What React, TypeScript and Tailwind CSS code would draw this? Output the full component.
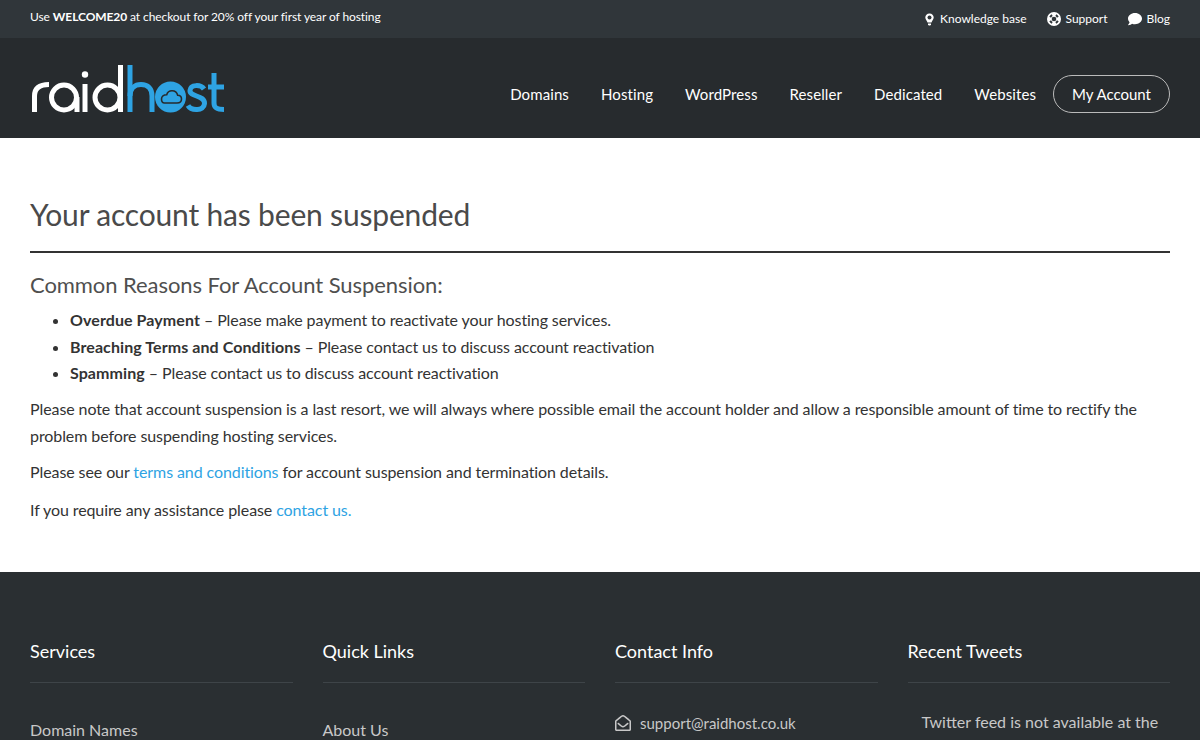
import { FaComment, FaRegEnvelopeOpen } from 'react-icons/fa';

const navLinks = ['Domains', 'Hosting', 'WordPress', 'Reseller', 'Dedicated', 'Websites'];

const BulbIcon = () => (
  <svg width="9" height="13" viewBox="0 0 9 13" className="block">
    <path d="M4.500 0.500C2 0.500 0.300 2.300 0.300 4.500C0.300 6.500 2 7.500 2.500 9.500H6.500C7 7.500 8.700 6.500 8.700 4.500C8.700 2.300 7 0.500 4.500 0.500Z" fill="#ffffff" />
    <circle cx="4.500" cy="4.500" r="2" fill="#30363a" />
    <path d="M3 10.500H6V11.500L5.200 12.500H3.800L3 11.500Z" fill="#ffffff" />
  </svg>
);

const RingIcon = () => (
  <svg width="14" height="14" viewBox="0 0 14 14" fill="none" className="block">
    <circle cx="7" cy="7" r="7" fill="#ffffff" />
    <circle cx="7" cy="7" r="2.300" fill="#30363a" />
    <path
      d="M3.200 5.200A4.300 4.300 0 0 1 5.200 3.200M8.800 3.200A4.300 4.300 0 0 1 10.800 5.200M10.800 8.800A4.300 4.300 0 0 1 8.800 10.800M5.200 10.800A4.300 4.300 0 0 1 3.200 8.800"
      stroke="#30363a"
      strokeWidth="2"
    />
  </svg>
);

const Logo = () => (
  <svg width="200" height="56" viewBox="0 0 200 56" fill="none" className="block mt-[4px]">
    {/* white part */}
    <g stroke="#ffffff" strokeWidth="5">
      <path d="M4.500 50V34C4.500 26 10 22.500 19 22.500" />
      <circle cx="34" cy="35.500" r="12.500" />
      <path d="M47 35V50" />
      <path d="M55 22V50" />
      <circle cx="77.500" cy="35.500" r="12.500" />
      <path d="M90.500 3V50" />
    </g>
    <circle cx="55" cy="12.500" r="3.200" fill="#ffffff" />
    {/* blue part */}
    <g stroke="#2ea3e3" strokeWidth="5">
      <path d="M100 3V50" />
      <path d="M100 34C100 26 105 22.500 111 22.500C118 22.500 122 26.500 122 34V50" />
      <path d="M174 27C171 22.500 160.500 22 160 28.500C159.500 35 175 33 174.500 41.500C174 49.500 161 49 158 43.500" />
      <path d="M184 11V41C184 46 187 47.500 194 47.500" />
      <path d="M178 25H194" />
    </g>
    <circle cx="140.500" cy="35" r="15.500" fill="#2ea3e3" />
    <path
      d="M134.500 41H147C150 41 151.500 39 151.500 37C151.500 34.800 149.800 33.300 147.700 33.300C147 30.300 144.700 28.700 142 28.700C139.300 28.700 137.300 30.500 136.700 32.700C133.800 32.700 131.500 34.500 131.500 37C131.500 39.300 132.800 41 134.500 41Z"
      stroke="#272b2e"
      strokeWidth="1.600"
    />
  </svg>
);

export default function App() {
  return (
    <div className="h-screen overflow-hidden bg-white font-['Lato','Open_Sans',sans-serif] text-base leading-[26.4px] tracking-[-0.09px] text-[#333]">
      {/* Top bar */}
      <div className="h-[38px] bg-[#30363a] px-[30px] flex items-center justify-between text-[12px] text-white">
        <p className="-mt-1">
          Use <strong>WELCOME20</strong> at checkout for 20% off your first year of hosting
        </p>
        <div className="flex items-center gap-5 tracking-normal">
          <a className="flex items-center gap-1.5">
            <BulbIcon />
            Knowledge base
          </a>
          <a className="flex items-center gap-[5px]">
            <RingIcon />
            Support
          </a>
          <a className="flex items-center gap-[5px]">
            <FaComment className="w-[14px] h-[14px]" />
            Blog
          </a>
        </div>
      </div>

      {/* Header */}
      <header className="h-[100px] bg-[#272b2e] px-[30px] flex items-center justify-between">
        <Logo />
        <nav className="mt-3 flex items-center gap-8 text-[15px] text-white tracking-[0.1px]">
          {navLinks.map((link) => (
            <a key={link}>{link}</a>
          ))}
          <a className="-ml-[15px] h-[38px] px-[18px] flex items-center rounded-full border border-[#bbb] tracking-normal">My Account</a>
        </nav>
      </header>

      {/* Main content */}
      <main className="h-[434px] px-[30px] pt-[55px]">
        <h1 className="pb-[16px] border-b-2 border-[#333] text-[30px] leading-[42px] tracking-[-0.18px] text-[#4a4a4a]">
          Your account has been suspended
        </h1>
        <h2 className="mt-[15px] mb-[6.2px] text-[22px] leading-[33px] tracking-[-0.07px] text-[#4f4f4f]">Common Reasons For Account Suspension:</h2>
        <ul className="list-disc pl-10 mb-[10px]">
          <li>
            <strong className="tracking-[0.08px]">Overdue Payment</strong> – Please make payment to reactivate your hosting services.
          </li>
          <li>
            <strong className="tracking-[0.08px]">Breaching Terms and Conditions</strong> – Please contact us to discuss account reactivation
          </li>
          <li>
            <strong className="tracking-[0.08px]">Spamming</strong> – Please contact us to discuss account reactivation
          </li>
        </ul>
        <p className="mb-[10px]">
          Please note that account suspension is a last resort, we will always where possible email the account holder and allow a responsible amount of time to rectify the problem before suspending hosting services.
        </p>
        <p className="mb-[10px]">
          Please see our <a className="text-[#2ea3e3]">terms and conditions</a> for account suspension and termination details.
        </p>
        <p className="mt-[11px]">
          If you require any assistance please <a className="text-[#2ea3e3]">contact us.</a>
        </p>
      </main>

      {/* Footer */}
      <footer className="bg-[#2a2f32] px-[30px] pt-[66px] pb-10 grid grid-cols-4 gap-[30px] text-[#c8c8c8] tracking-normal">
        <div>
          <h4 className="pb-[17px] mb-[34px] border-b border-[#3e4448] text-[18px] leading-[27px] text-white">Services</h4>
          <ul>
            <li>Domain Names</li>
          </ul>
        </div>
        <div>
          <h4 className="pb-[17px] mb-[34px] border-b border-[#3e4448] text-[18px] leading-[27px] text-white">Quick Links</h4>
          <ul>
            <li>About Us</li>
          </ul>
        </div>
        <div>
          <h4 className="pb-[17px] mb-[27px] border-b border-[#3e4448] text-[18px] leading-[27px] text-white">Contact Info</h4>
          <p className="flex items-center gap-[9px] text-[15px]">
            <FaRegEnvelopeOpen className="w-4 h-4" />
            support@raidhost.co.uk
          </p>
        </div>
        <div>
          <h4 className="pb-[17px] mb-[26px] border-b border-[#3e4448] text-[18px] leading-[27px] text-white">Recent Tweets</h4>
          <p className="pl-3.5">Twitter feed is not available at the moment.</p>
        </div>
      </footer>
    </div>
  );
}
